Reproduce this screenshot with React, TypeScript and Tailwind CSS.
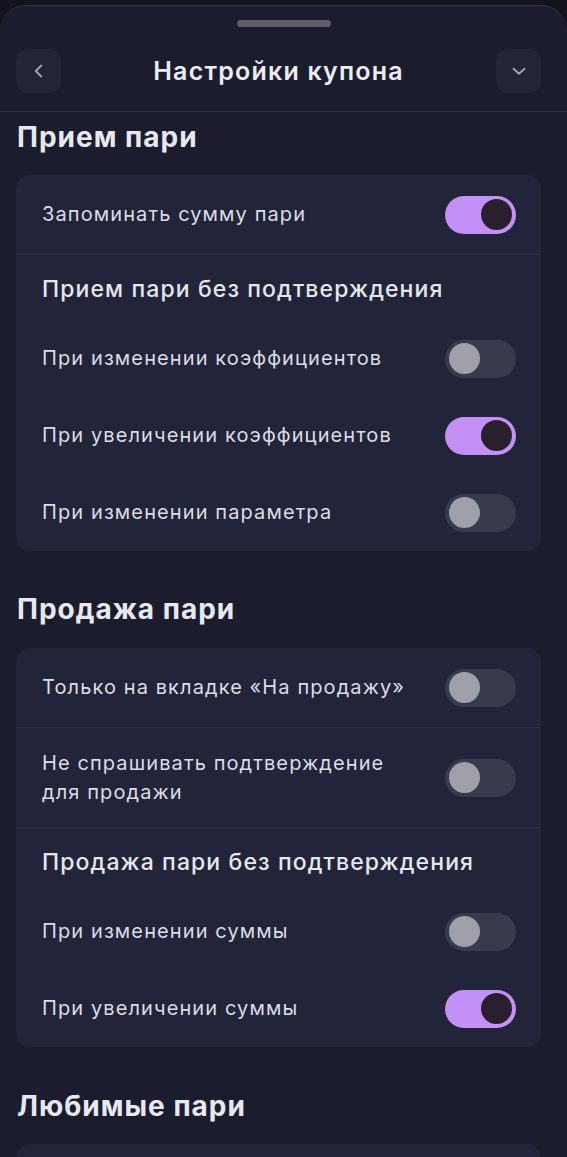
import React from 'react';

const font = { fontFamily: 'Inter, "Open Sans", sans-serif' };

const Toggle: React.FC<{ on?: boolean }> = ({ on }) => (
  <div
    className={`w-[71px] h-[38px] rounded-full flex items-center px-[4px] shrink-0 ${
      on ? 'bg-[#c391f6] justify-end' : 'bg-[#383a4d] justify-start'
    }`}
  >
    <div className={`w-[31px] h-[31px] rounded-full ${on ? 'bg-[#2a1f2d]' : 'bg-[#a0a0aa]'}`} />
  </div>
);

const Row: React.FC<{ label: React.ReactNode; on?: boolean; h?: string }> = ({ label, on, h = 'h-[77px]' }) => (
  <div className={`flex items-center justify-between pl-[26px] pr-[25px] ${h}`}>
    <span className="text-[20px] leading-[29px] tracking-[1.1px] text-[#dcdde4]">{label}</span>
    <Toggle on={on} />
  </div>
);

const Divider = () => <div className="h-px bg-[#2c2e44]" />;

const SubHead: React.FC<{ children: React.ReactNode }> = ({ children }) => (
  <div className="h-[65px] flex items-center pl-[26px] pt-[2px]">
    <span className="text-[23px] leading-[30px] font-medium tracking-[1.1px] text-[#e6e7ec]">{children}</span>
  </div>
);

const Heading: React.FC<{ children: React.ReactNode }> = ({ children }) => (
  <h2 className="px-[17px] text-[28px] leading-[34px] font-bold tracking-[1px] text-[#e8e9ef]">{children}</h2>
);

export default function App() {
  return (
    <div className="w-[567px] h-[1157px] bg-[#12131c] overflow-hidden" style={font}>
      <div className="h-[5px]" />
      <div className="h-[1152px] rounded-t-[26px] border-t border-[#33344b] bg-[#1b1d2e] overflow-hidden flex flex-col">
        <div className="flex justify-center pt-[14px]">
          <div className="w-[94px] h-[7px] rounded-full bg-[#5e5f68]" />
        </div>
        <div className="flex items-center pl-[16px] pr-[26px] pt-[22px] pb-[18px] border-b border-[#2e3045]">
          <button className="w-[45px] h-[44px] rounded-[12px] bg-[#232537] flex items-center justify-center">
            <svg width="22" height="22" viewBox="0 0 24 24" fill="none" stroke="#a3a4ae" strokeWidth="2" strokeLinecap="round" strokeLinejoin="round">
              <path d="M14.5 6l-6 6 6 6" />
            </svg>
          </button>
          <h1 className="flex-1 text-center text-[25px] leading-[30px] font-semibold tracking-[1.2px] text-[#ececf1]">
            Настройки купона
          </h1>
          <button className="w-[45px] h-[44px] rounded-[12px] bg-[#232537] flex items-center justify-center">
            <svg width="22" height="22" viewBox="0 0 24 24" fill="none" stroke="#a3a4ae" strokeWidth="2" strokeLinecap="round" strokeLinejoin="round">
              <path d="M6 9.5l6 5.5 6-5.5" />
            </svg>
          </button>
        </div>

        <div className="pt-[8px]">
          <Heading>Прием пари</Heading>
          <div className="ml-[16px] mr-[26px] mt-[21px] rounded-[14px] bg-[#222439]">
            <Row label="Запоминать сумму пари" on h="h-[79px]" />
            <Divider />
            <SubHead>Прием пари без подтверждения</SubHead>
            <Row label="При изменении коэффициентов" />
            <Row label="При увеличении коэффициентов" on />
            <Row label="При изменении параметра" />
          </div>

          <div className="mt-[41px]">
            <Heading>Продажа пари</Heading>
          </div>
          <div className="ml-[16px] mr-[26px] mt-[22px] rounded-[14px] bg-[#222439]">
            <Row label="Только на вкладке «На продажу»" h="h-[79px]" />
            <Divider />
            <Row
              label={
                <>
                  Не спрашивать подтверждение
                  <br />
                  для продажи
                </>
              }
              h="h-[99px]"
            />
            <Divider />
            <SubHead>Продажа пари без подтверждения</SubHead>
            <Row label="При изменении суммы" />
            <Row label="При увеличении суммы" on />
          </div>

          <div className="mt-[42px]">
            <Heading>Любимые пари</Heading>
          </div>
          <div className="ml-[16px] mr-[26px] mt-[21px] h-[80px] rounded-[14px] bg-[#222439]" />
        </div>
      </div>
    </div>
  );
}
